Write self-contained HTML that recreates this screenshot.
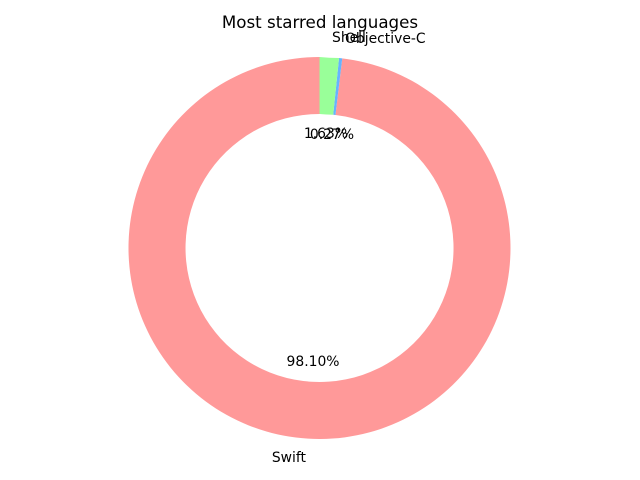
<!DOCTYPE html>
<html><head><meta charset="utf-8"><style>
html,body{margin:0;padding:0;background:#fff;}
svg{display:block;}
text{font-family:"DejaVu Sans","Liberation Sans",sans-serif;fill:#000;}
</style></head><body>
<svg width="640" height="480" viewBox="0 0 640 480">
<path d="M 319.5 57 A 191 191 0 1 0 342.25 58.36 L 335.46 114.95 A 134 134 0 1 1 319.5 114 Z" fill="#ff9999"/>
<path d="M 342.25 58.36 L 339.03 58.0 L 333.2 114.7 L 335.46 114.95 Z" fill="#66b3ff"/>
<path d="M 339.03 58.0 A 191 191 0 0 1 319.5 57 L 319.5 114 A 134 134 0 0 0 333.2 114.7 Z" fill="#99ff99"/>
<text x="320" y="28" font-size="16.7" text-anchor="middle">Most starred languages</text>
<text x="306" y="462" font-size="13.9" text-anchor="end">Swift</text>
<text x="332" y="42" font-size="13.9">Shell</text>
<text x="345" y="43" font-size="13.9">Objective-C</text>
<text x="313" y="366" font-size="13.9" text-anchor="middle">98.10%</text>
<text x="326" y="138" font-size="13.9" text-anchor="middle">1.63%</text>
<text x="332" y="139" font-size="13.9" text-anchor="middle">0.27%</text>
</svg>
</body></html>
